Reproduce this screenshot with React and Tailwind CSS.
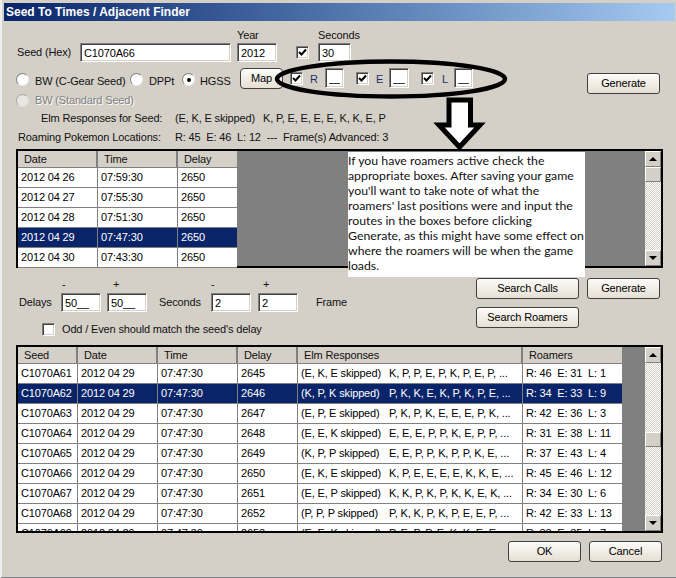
const sunken = "border border-t-[#808080] border-l-[#808080] border-r-white border-b-white shadow-[inset_1px_1px_0_#404040,inset_-1px_-1px_0_#d4d0c8] bg-white"

const topRows = [
  ["2012 04 26", "07:59:30", "2650"],
  ["2012 04 27", "07:55:30", "2650"],
  ["2012 04 28", "07:51:30", "2650"],
  ["2012 04 29", "07:47:30", "2650"],
  ["2012 04 30", "07:43:30", "2650"],
]

const seedRows = [
  ["C1070A61", "2645", "(E, K, E skipped)", "K, P, P, E, P, K, P, E, P, ...", "R: 46  E: 31  L: 1"],
  ["C1070A62", "2646", "(K, P, K skipped)", "P, K, K, E, K, P, K, P, E, ...", "R: 34  E: 33  L: 9"],
  ["C1070A63", "2647", "(E, P, E skipped)", "P, K, P, K, E, E, E, P, K, ...", "R: 42  E: 36  L: 3"],
  ["C1070A64", "2648", "(E, E, K skipped)", "E, E, E, P, P, K, E, P, P, ...", "R: 31  E: 38  L: 11"],
  ["C1070A65", "2649", "(K, P, P skipped)", "E, E, P, P, K, P, P, K, E, ...", "R: 37  E: 43  L: 4"],
  ["C1070A66", "2650", "(E, K, E skipped)", "K, P, E, E, E, E, K, K, E, ...", "R: 45  E: 46  L: 12"],
  ["C1070A67", "2651", "(E, E, P skipped)", "K, K, P, K, P, K, K, E, K, ...", "R: 34  E: 30  L: 6"],
  ["C1070A68", "2652", "(P, P, P skipped)", "P, K, K, P, K, P, E, E, P, ...", "R: 42  E: 33  L: 13"],
  ["C1070A69", "2653", "(E, E, K skipped)", "P, E, P, P, E, K, K, E, E, ...", "R: 38  E: 35  L: 7"],
]

const note = [
  "If you have roamers active check the",
  "appropriate boxes. After saving your game",
  "you'll want to take note of what the",
  "roamers' last positions were and input the",
  "routes in the boxes before clicking",
  "Generate, as this might have some effect on",
  "where the roamers will be when the game",
  "loads.",
]

function Field({ value, className }) {
  return (
    <input
      readOnly
      value={value}
      className={`${sunken} h-[19px] px-[3px] text-black outline-none ${className}`}
    />
  )
}

function Check({ checked, className = "" }) {
  return (
    <span className={`${sunken} w-[13px] h-[13px] shrink-0 flex items-center justify-center ${className}`}>
      {checked && (
        <svg width="9" height="9" viewBox="0 0 9 9">
          <path d="M1 4 L3.5 6.5 L8 1.5" fill="none" stroke="#000" strokeWidth="2" />
        </svg>
      )}
    </span>
  )
}

function Radio({ on, className = "" }) {
  return (
    <span className={`w-[13px] h-[13px] shrink-0 rounded-full bg-white border border-t-[#808080] border-l-[#808080] border-r-[#eeeeee] border-b-[#eeeeee] flex items-center justify-center ${className}`}>
      {on && <span className="w-[4px] h-[4px] rounded-full bg-black" />}
    </span>
  )
}

function Btn({ children, className = "" }) {
  return (
    <button className={`h-[21px] rounded-[3px] border border-[#404040] bg-gradient-to-b from-[#fdfcfa] to-[#e6dfd3] text-black leading-none ${className}`}>
      {children}
    </button>
  )
}

function Arrow({ up }) {
  return (
    <div className="h-[16px] shrink-0 bg-[#d4d0c8] border border-t-white border-l-white border-r-[#808080] border-b-[#808080] flex items-center justify-center">
      <span className={`w-0 h-0 border-x-[4px] border-x-transparent ${up ? "border-b-[4px] border-b-black" : "border-t-[4px] border-t-black"}`} />
    </div>
  )
}

function Scrollbar({ thumbClass }) {
  return (
    <div className="w-[16px] shrink-0 flex flex-col">
      <Arrow up />
      <div className="flex-1 bg-[repeating-conic-gradient(#d4d0c8_0_25%,#ffffff_0_50%)] bg-[length:2px_2px]">
        <div className={`h-[15px] bg-[#d4d0c8] border border-t-white border-l-white border-r-[#808080] border-b-[#808080] ${thumbClass}`} />
      </div>
      <Arrow />
    </div>
  )
}

function Head({ label, className }) {
  return (
    <div className={`h-full pl-[6px] pt-[1px] border-r-2 border-r-[#808080] leading-[14px] shrink-0 ${className}`}>
      {label}
    </div>
  )
}

function Cell({ children, className }) {
  return (
    <div className={`h-full pl-[3px] border-r border-r-[#808080] leading-[18px] whitespace-pre overflow-hidden shrink-0 ${className}`}>
      {children}
    </div>
  )
}

function TopTable() {
  return (
    <div className="ml-[16px] w-[647px] h-[119px] border-2 border-black bg-[#808080] flex">
      <div className="w-[219px] shrink-0">
        <div className="h-[17px] flex bg-[#d4d0c8] border-b border-b-[#808080]">
          <Head label="Date" className="w-[80px]" />
          <Head label="Time" className="w-[80px]" />
          <div className="pl-[6px] pt-[1px] leading-[14px]">Delay</div>
        </div>
        {topRows.map((r, i) => (
          <div key={r[0]} className={`h-[20px] flex border-b border-b-[#808080] ${i === 3 ? "bg-[#0a246a] text-white" : "bg-white text-black"}`}>
            <Cell className="w-[80px]">{r[0]}</Cell>
            <Cell className="w-[80px]">{r[1]}</Cell>
            <Cell className="w-[59px] border-r-0">{r[2]}</Cell>
          </div>
        ))}
      </div>
      <div className="flex-1" />
      <Scrollbar thumbClass="mt-0" />
    </div>
  )
}

function SeedTable() {
  return (
    <div className="ml-[16px] w-[647px] h-[188px] border-2 border-black bg-[#808080] flex overflow-hidden">
      <div className="w-[604px] shrink-0">
        <div className="h-[17px] flex bg-[#d4d0c8] border-b border-b-[#808080]">
          <Head label="Seed" className="w-[60px]" />
          <Head label="Date" className="w-[80px]" />
          <Head label="Time" className="w-[80px]" />
          <Head label="Delay" className="w-[60px]" />
          <Head label="Elm Responses" className="w-[225px]" />
          <div className="pl-[6px] pt-[1px] leading-[14px]">Roamers</div>
        </div>
        {seedRows.map((r, i) => (
          <div key={r[0]} className={`h-[20px] flex border-b border-b-[#808080] ${i === 1 ? "bg-[#0a246a] text-white" : "bg-white text-black"}`}>
            <Cell className="w-[60px] pl-[2px]">{r[0]}</Cell>
            <Cell className="w-[80px]">2012 04 29</Cell>
            <Cell className="w-[80px]">07:47:30</Cell>
            <Cell className="w-[60px]">{r[1]}</Cell>
            <Cell className="w-[225px] flex">
              <span className="w-[88px] shrink-0">{r[2]}</span>
              <span>{r[3]}</span>
            </Cell>
            <Cell className="w-[99px] border-r-0">{r[4]}</Cell>
          </div>
        ))}
      </div>
      <div className="flex-1" />
      <Scrollbar thumbClass="mt-[69px]" />
    </div>
  )
}

export default function App() {
  return (
    <div className="relative w-[676px] h-[578px] overflow-hidden bg-[#d4d0c8] border-l-2 border-l-[#eeeeee] border-b border-b-[#808080] pt-[3px] text-[11px] tracking-[-0.15px] text-[#111] font-['Liberation_Sans',sans-serif] box-border">
      <div className="-ml-[2px]">
        {/* title bar */}
        <div className="ml-[4px] w-[671px] h-[18px] bg-gradient-to-r from-[#0a246a] to-[#a6caf0] pl-[2px] text-white font-bold text-[12px] tracking-normal leading-[18px]">
          Seed To Times / Adjacent Finder
        </div>

        {/* year and seconds captions */}
        <div className="h-[14px] mt-[8px] flex leading-[13px]">
          <span className="ml-[237px] w-[81px]">Year</span>
          <span>Seconds</span>
        </div>

        {/* seed row */}
        <div className="h-[19px] flex items-center">
          <span className="ml-[17px] w-[63px]">Seed (Hex)</span>
          <Field value="C1070A66" className="w-[151px]" />
          <Field value="2012" className="w-[40px] ml-[6px]" />
          <Check checked className="ml-[19px]" />
          <Field value="30" className="w-[33px] ml-[9px]" />
        </div>

        {/* game radios, map and roamer boxes */}
        <div className="h-[26px] mt-[6px] flex items-start">
          <Radio className="ml-[16px] mt-[5px]" />
          <span className="ml-[6px] mt-[5px] w-[95px]">BW (C-Gear Seed)</span>
          <Radio className="mt-[5px]" />
          <span className="ml-[6px] mt-[5px] w-[33px]">DPPt</span>
          <Radio on className="mt-[5px]" />
          <span className="ml-[5px] mt-[5px] w-[40px]">HGSS</span>
          <Btn className="w-[43px] h-[20px] rounded-[4px]">Map</Btn>
          <Check checked className="ml-[7px] mt-[4px]" />
          <span className="ml-[7px] mt-[3px] w-[15px] text-[#1f2f5f]">R</span>
          <Field value="__" className="w-[19px] h-[20px]" />
          <Check checked className="ml-[12px] mt-[4px]" />
          <span className="ml-[7px] mt-[3px] w-[13px] text-[#1f2f5f]">E</span>
          <Field value="__" className="w-[20px] h-[20px]" />
          <Check checked className="ml-[12px] mt-[4px]" />
          <span className="ml-[8px] mt-[3px] w-[12px] text-[#1f2f5f]">L</span>
          <Field value="__" className="w-[19px] h-[20px]" />
          <Btn className="w-[73px] ml-[114px] mt-[5px]">Generate</Btn>
        </div>

        <div className="h-[13px] flex items-center">
          <Radio className="ml-[16px] opacity-50" />
          <span className="ml-[6px] text-[#808080] [text-shadow:1px_1px_0_#fff]">BW (Standard Seed)</span>
        </div>

        <div className="h-[13px] mt-[5px] flex items-center leading-[13px]">
          <span className="ml-[41px] w-[134px]">Elm Responses for Seed:</span>
          <span className="w-[88px]">(E, K, E skipped)</span>
          <span>K, P, E, E, E, E, K, K, E, P</span>
        </div>
        <div className="h-[13px] mt-[6px] flex items-center leading-[13px]">
          <span className="ml-[18px] w-[157px]">Roaming Pokemon Locations:</span>
          <span className="whitespace-pre">R: 45  E: 46  L: 12  ---  Frame(s) Advanced: 3</span>
        </div>

        <div className="mt-[5px]">
          <TopTable />
        </div>

        {/* delay and seconds filter */}
        <div className="h-[67px] mt-[10px] flex">
          <div className="w-[476px] shrink-0">
            <div className="h-[15px] flex leading-[13px]">
              <span className="ml-[62px] w-[51px]">-</span>
              <span className="w-[98px]">+</span>
              <span className="w-[52px]">-</span>
              <span>+</span>
            </div>
            <div className="h-[19px] flex items-center">
              <span className="ml-[19px] w-[42px]">Delays</span>
              <Field value="50__" className="w-[40px]" />
              <Field value="50__" className="w-[40px] ml-[6px]" />
              <span className="ml-[12px] w-[52px]">Seconds</span>
              <Field value="2" className="w-[40px]" />
              <Field value="2" className="w-[40px] ml-[7px]" />
              <span className="ml-[18px]">Frame</span>
            </div>
            <div className="mt-[9px] flex items-center">
              <Check className="ml-[42px]" />
              <span className="ml-[7px]">Odd / Even should match the seed's delay</span>
            </div>
          </div>
          <div className="w-[187px] shrink-0">
            <div className="flex gap-[8px]">
              <Btn className="w-[103px]">Search Calls</Btn>
              <Btn className="w-[73px]">Generate</Btn>
            </div>
            <Btn className="w-[103px] mt-[8px]">Search Roamers</Btn>
          </div>
        </div>

        <SeedTable />

        <div className="mt-[8px] flex justify-end gap-[8px] pr-[14px]">
          <Btn className="w-[73px]">OK</Btn>
          <Btn className="w-[73px]">Cancel</Btn>
        </div>
      </div>

      {/* annotation drawn over the dialog */}
      <div className="absolute left-[346px] top-[152px] w-[237px] h-[125px] bg-white pt-[1px] font-['Lato',sans-serif] text-[12.3px] tracking-normal leading-[15px] text-[#111] whitespace-nowrap">
        {note.map((line) => (
          <div key={line}>{line}</div>
        ))}
      </div>
      <svg className="absolute left-[-2px] top-0" width="676" height="160" viewBox="0 0 676 160">
        <ellipse cx="391" cy="79" rx="114" ry="17.5" fill="none" stroke="#000" strokeWidth="4.5" />
        <path d="M449 100 H470.5 V125 H480 L459.5 147 L439 125 H449 Z" fill="#fff" stroke="#000" strokeWidth="5" />
      </svg>
    </div>
  )
}
